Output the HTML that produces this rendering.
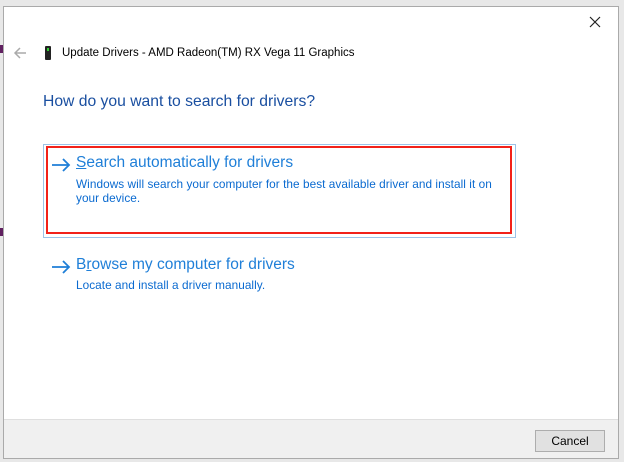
<!DOCTYPE html>
<html><head><style>
body{margin:0;width:624px;height:462px;background:#e8e8e8;position:relative;overflow:hidden;font-family:"Liberation Sans",sans-serif}
.win{position:absolute;left:3px;top:6px;width:616px;height:453px;background:#fff;border:1px solid #aaa;box-sizing:border-box}
.foot{position:absolute;left:0;right:0;top:412px;bottom:0;background:#f0f0f0;border-top:1px solid #dfdfdf}
.t{position:absolute;white-space:nowrap}
.blue{color:#0066cc}
</style></head><body>
<div style="position:absolute;left:0;top:45px;width:3px;height:8px;background:#602060"></div>
<div style="position:absolute;left:0;top:228px;width:3px;height:8px;background:#602060"></div>
<div class="win">
 <svg style="position:absolute;left:585px;top:9px" width="12" height="12"><path d="M1 1L11 11M11 1L1 11" stroke="#222" stroke-width="1.2"/></svg>
 <svg style="position:absolute;left:9px;top:40px" width="14" height="12"><path d="M13 6H2M7 1L2 6L7 11" stroke="#aaa" stroke-width="1.5" fill="none"/></svg>
 <div style="position:absolute;left:41px;top:39px;width:6px;height:14px;background:#222;border-radius:1px"></div>
 <div style="position:absolute;left:43px;top:41px;width:2px;height:3px;background:#3c3"></div>
 <div class="t" style="left:58px;top:40px;font-size:11.5px;color:#000">Update Drivers - AMD Radeon(TM) RX Vega 11 Graphics</div>
 <div class="t" style="left:39px;top:86px;font-size:15.7px;color:#1a4fa0">How do you want to search for drivers?</div>
 <div style="position:absolute;left:39px;top:137px;width:473px;height:94px;border:1px solid #9cc3e8;box-sizing:border-box"></div>
 <div style="position:absolute;left:42px;top:139px;width:466px;height:88px;border:2px solid #f2221a;box-sizing:border-box"></div>
 <svg style="position:absolute;left:47px;top:151px" width="20" height="14"><path d="M1 7H18M12 1L18 7L12 13" stroke="#1f7fd8" stroke-width="1.8" fill="none"/></svg>
 <div class="t blue" style="left:72px;top:147px;font-size:15.5px;color:#1f7fd8"><u>S</u>earch automatically for drivers</div>
 <div class="t blue" style="left:72px;top:170px;font-size:11.8px;line-height:14px;color:#0a6ad0;letter-spacing:0.05px">Windows will search your computer for the best available driver and install it on<br>your device.</div>
 <svg style="position:absolute;left:47px;top:253px" width="20" height="14"><path d="M1 7H18M12 1L18 7L12 13" stroke="#1f7fd8" stroke-width="1.8" fill="none"/></svg>
 <div class="t blue" style="left:72px;top:249px;font-size:15.5px;color:#1f7fd8">B<u>r</u>owse my computer for drivers</div>
 <div class="t blue" style="left:72px;top:271px;font-size:11.8px;color:#0a6ad0;letter-spacing:0.05px">Locate and install a driver manually.</div>
 <div class="foot">
  <div style="position:absolute;left:531px;top:10px;width:70px;height:22px;background:#e1e1e1;border:1px solid #adadad;box-sizing:border-box;font-size:12px;text-align:center;line-height:20px">Cancel</div>
 </div>
</div>
</body></html>
